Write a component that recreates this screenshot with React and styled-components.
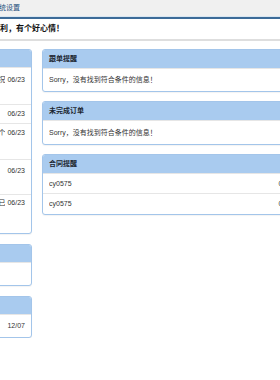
import React from 'react';
import styled, { createGlobalStyle } from 'styled-components';

const Global = createGlobalStyle`
  html, body { margin: 0; padding: 0; background: #fff; }
  body {
    overflow: hidden;
    font-family: "Liberation Sans", "Noto Sans CJK SC", sans-serif;
    color: #333;
  }
  * { box-sizing: border-box; }
`;

const Page = styled.div`
  width: 280px;
  overflow: hidden;
`;

const TopBar = styled.div`
  height: 19px;
  background: #f0f0f0;
  border-bottom: 2px solid #3d6b98;
  box-shadow: inset 0 -1px 0 #d9e6f1;
  font-size: 7px;
  line-height: 16px;
  color: #1d4f7c;
  white-space: nowrap;
  overflow: hidden;
`;

const Greeting = styled.div`
  height: 22px;
  border-bottom: 2px solid #dedede;
  font-size: 8px;
  font-weight: bold;
  line-height: 19px;
  color: #111;
  white-space: nowrap;
  overflow: hidden;
`;

const Shift = styled.span`
  display: inline-block;
  margin-left: ${(p) => p.$by}px;
`;

const Content = styled.div`
  display: flex;
  align-items: flex-start;
  gap: 10px;
  padding-top: 8px;
  width: 600px;
`;

const Column = styled.div`
  flex: none;
  width: ${(p) => p.$w}px;
  margin-left: ${(p) => p.$offset || 0}px;
  display: flex;
  flex-direction: column;
  gap: ${(p) => p.$gap}px;
`;

const Panel = styled.section`
  border: 1px solid #a3c5ea;
  border-radius: 3px;
  background: #fff;
  overflow: hidden;
  box-shadow: 0 1px 1px rgba(0, 0, 0, 0.05);
`;

const PanelHeader = styled.div`
  height: ${(p) => p.$h}px;
  line-height: ${(p) => p.$h}px;
  background: #a9cbef;
  padding: 0 6px;
  font-size: 7px;
  font-weight: bold;
  color: #1c2630;
  white-space: nowrap;
`;

const Row = styled.div`
  display: flex;
  align-items: flex-start;
  gap: 2px;
  height: ${(p) => p.$h}px;
  padding: ${(p) => p.$pt}px 6px 0 6px;
  border-top: 1px solid #e6e6e6;
  font-size: 7px;
  line-height: 14px;
  color: #333;
  &:first-child { border-top: none; }
`;

const Title = styled.div`
  flex: 1;
  min-width: 0;
`;

const Line = styled.div`
  display: flex;
  justify-content: ${(p) => (p.$end ? 'flex-end' : 'flex-start')};
  white-space: nowrap;
  overflow: hidden;
`;

const DateText = styled.span`
  flex: none;
  white-space: nowrap;
  color: #333;
`;

const leftRows = [
  { h: 37, pt: 5, first: '客户上海华东贸易有限公司的报价单已经发送，请及时跟进回访结果并记录跟进情况', end: true, rest: '请尽快处理' },
  { h: 19, pt: 2, first: '新订单', end: false, rest: null },
  { h: 36, pt: 2, first: '供应商交货延期通知，请相关业务员注意安排生产计划，有问题联系采购部的那个', end: true, rest: '谢谢' },
  { h: 35, pt: 4, first: 'Order', end: false, rest: 'confirmation' },
  { h: 39, pt: 1, first: '样品已经寄出，快递单号已登记到系统中，请注意查收并确认客户是否已', end: true, rest: '收货' },
];

export default function App() {
  return (
    <Page>
      <Global />
      <TopBar>
        <Shift $by={-8}>系统设置</Shift>
      </TopBar>
      <Greeting>
        <Shift $by={-40}>祝您工作顺利，有个好心情！</Shift>
      </Greeting>
      <Content>
        <Column $w={258} $offset={-226} $gap={10}>
          <Panel>
            <PanelHeader $h={17}>最新公告</PanelHeader>
            {leftRows.map((r, i) => (
              <Row key={i} $h={r.h} $pt={r.pt}>
                <Title>
                  <Line $end={r.end}>
                    <span>{r.first}</span>
                  </Line>
                  {r.rest && <Line>{r.rest}</Line>}
                </Title>
                <DateText>06/23</DateText>
              </Row>
            ))}
          </Panel>
          <Panel>
            <PanelHeader $h={17}>生日提醒</PanelHeader>
            <Row $h={23} $pt={4} />
          </Panel>
          <Panel>
            <PanelHeader $h={17}>工作计划</PanelHeader>
            <Row $h={23} $pt={4}>
              <Title>
                <Line>月度计划</Line>
              </Title>
              <DateText>12/07</DateText>
            </Row>
          </Panel>
        </Column>
        <Column $w={261} $gap={9}>
          <Panel>
            <PanelHeader $h={18}>跟单提醒</PanelHeader>
            <Row $h={23} $pt={4}>
              <Title>
                <Line>Sorry，没有找到符合条件的信息！</Line>
              </Title>
            </Row>
          </Panel>
          <Panel>
            <PanelHeader $h={18}>未完成订单</PanelHeader>
            <Row $h={24} $pt={5}>
              <Title>
                <Line>Sorry，没有找到符合条件的信息！</Line>
              </Title>
            </Row>
          </Panel>
          <Panel>
            <PanelHeader $h={18}>合同提醒</PanelHeader>
            <Row $h={20} $pt={3}>
              <Title>
                <Line>cy0575</Line>
              </Title>
              <DateText>06/23</DateText>
            </Row>
            <Row $h={21} $pt={3}>
              <Title>
                <Line>cy0575</Line>
              </Title>
              <DateText>06/23</DateText>
            </Row>
          </Panel>
        </Column>
      </Content>
    </Page>
  );
}
